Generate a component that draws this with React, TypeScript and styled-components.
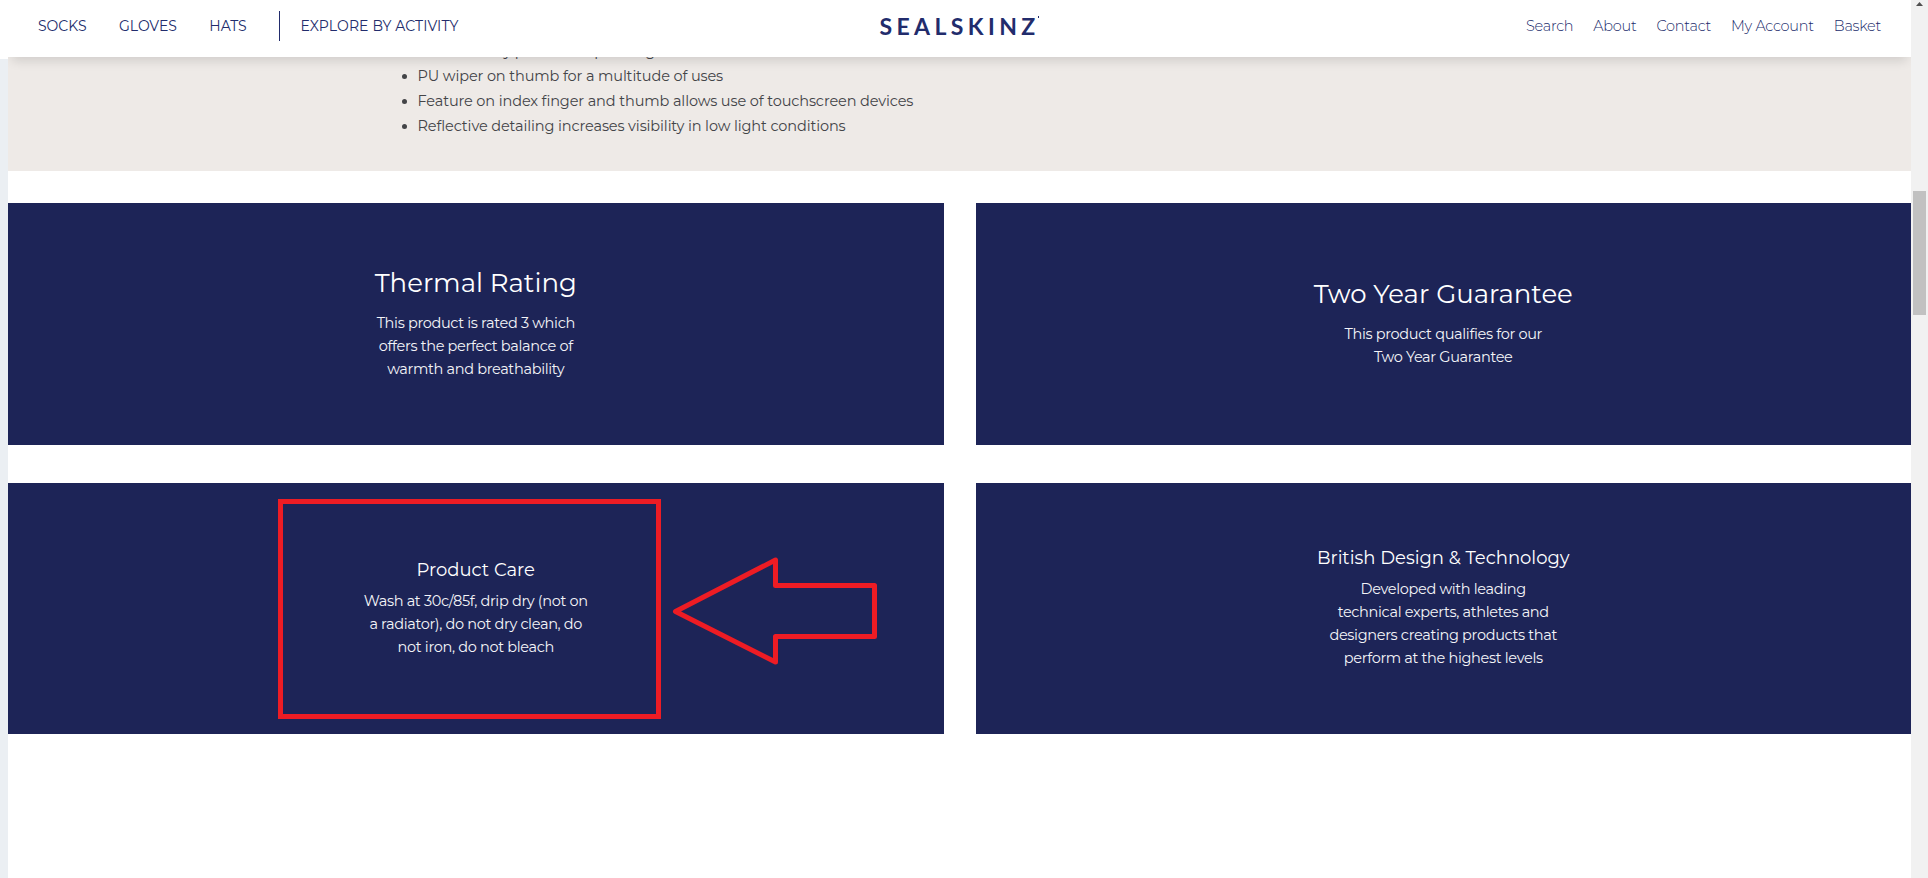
import * as React from 'react';
import styled, {createGlobalStyle} from 'styled-components';

const navy = '#1d2457';
const linkBlue = '#222c6c';
const markerRed = '#ed1c24';

const GlobalStyle = createGlobalStyle`
    body {
        margin: 0;
        overflow: hidden;
        background: #fff;
        font-family: Montserrat, Inter, sans-serif;
    }
`;

const Screen = styled.div`
    display: grid;
    grid-template-columns: 8px 1fr 17px;
    height: 878px;
`;

const Gutter = styled.div`
    margin-top: 59px;
    background: #ebeff3;
`;

const Page = styled.div`
    display: flex;
    flex-direction: column;
    min-width: 0;
    overflow: hidden;
`;

const Header = styled.header`
    position: relative;
    z-index: 1;
    box-sizing: border-box;
    flex: none;
    display: grid;
    grid-template-columns: 1fr auto 1fr;
    align-items: center;
    height: 57px;
    padding: 0 30px 5px;
    background: #fff;
    color: ${linkBlue};
    box-shadow: 0 8px 10px -4px rgba(0, 0, 0, 0.12);
`;

const MainNav = styled.nav`
    display: flex;
    align-items: center;
    font-size: 14px;
    white-space: nowrap;
`;

const NavLink = styled.span`
    margin-right: 32.4px;
`;

const ActivityLink = styled.span`
    display: flex;
    align-items: center;
    height: 30px;
    margin-left: 0.3px;
    padding-left: 20px;
    border-left: 1px solid ${linkBlue};
    letter-spacing: 0.12px;
`;

const Logo = styled.div`
    display: flex;
    align-items: flex-start;
    margin-right: 1px;
    font: 700 23px/28px Lato, sans-serif;
    letter-spacing: 4.4px;
`;

const LogoMark = styled.span`
    width: 1px;
    height: 2px;
    margin: 4px 0 0 -2px;
    background: ${linkBlue};
`;

const UserNav = styled.nav`
    display: flex;
    justify-content: flex-end;
    gap: 20px;
    font-size: 14.5px;
    font-weight: 300;
    letter-spacing: -0.27px;
`;

const Features = styled.section`
    box-sizing: border-box;
    flex: none;
    display: flex;
    flex-direction: column;
    justify-content: flex-end;
    height: 114px;
    padding: 0 0 32px 392px;
    overflow: hidden;
    background: #eeeae7;
`;

const FeatureList = styled.ul`
    margin: 0;
    padding: 0;
    list-style: none;
    color: #434447;
    font-size: 14.5px;
    line-height: 25px;
    letter-spacing: -0.12px;
`;

const FeatureItem = styled.li`
    display: flex;
    align-items: center;

    &::before {
        content: '';
        width: 5px;
        height: 5px;
        margin: 0 10.5px 1px 2px;
        border-radius: 50%;
        background: currentColor;
    }
`;

const Cards = styled.section`
    display: grid;
    grid-template-columns: 1fr 1fr;
    grid-template-rows: 242px 251px;
    gap: 38px 32px;
    margin-top: 32px;
`;

const Card = styled.article<{$small?: boolean}>`
    position: relative;
    display: flex;
    flex-direction: column;
    align-items: center;
    justify-content: center;
    padding-bottom: ${({$small}) => ($small ? '0' : '1px')};
    background: ${navy};
    color: #fff;
    text-align: center;
`;

const CardTitle = styled.h2<{$small?: boolean}>`
    margin: 0 0 ${({$small}) => ($small ? '9px' : '13px')};
    font-size: ${({$small}) => ($small ? '18px' : '26px')};
    line-height: ${({$small}) => ($small ? '22px' : '32px')};
    font-weight: 400;
`;

const CardText = styled.p`
    margin: 0;
    color: #f4f4f8;
    font-size: 14.5px;
    line-height: 23px;
    letter-spacing: -0.33px;
    white-space: pre-line;
`;

const Highlight = styled.div`
    position: absolute;
    top: 16px;
    left: 270px;
    box-sizing: border-box;
    width: 383px;
    height: 220px;
    border: 5px solid ${markerRed};
`;

const Arrow = styled.svg`
    position: absolute;
    top: 72px;
    left: 662px;
`;

const Scrollbar = styled.div`
    display: flex;
    flex-direction: column;
    align-items: center;
    background: #f1f1f1;
`;

const ScrollUp = styled.svg`
    display: block;
    margin-top: 2px;
`;

const ScrollThumb = styled.div`
    width: 13px;
    height: 124px;
    margin-top: 185px;
    background: #c1c1c1;
`;

const features = [
    'Anatomically positioned padding',
    'PU wiper on thumb for a multitude of uses',
    'Feature on index finger and thumb allows use of touchscreen devices',
    'Reflective detailing increases visibility in low light conditions',
];

const shopLinks = ['SOCKS', 'GLOVES', 'HATS'];

const userLinks = ['Search', 'About', 'Contact', 'My Account', 'Basket'];

interface CardModel {
    title: string;
    text: string;
    small?: boolean;
    highlighted?: boolean;
}

const cards: CardModel[] = [
    {
        title: 'Thermal Rating',
        text: 'This product is rated 3 which\noffers the perfect balance of\nwarmth and breathability',
    },
    {
        title: 'Two Year Guarantee',
        text: 'This product qualifies for our\nTwo Year Guarantee',
    },
    {
        title: 'Product Care',
        text: 'Wash at 30c/85f, drip dry (not on\na radiator), do not dry clean, do\nnot iron, do not bleach',
        small: true,
        highlighted: true,
    },
    {
        title: 'British Design & Technology',
        text: 'Developed with leading\ntechnical experts, athletes and\ndesigners creating products that\nperform at the highest levels',
        small: true,
    },
];

const Annotation = () => (
    <>
        <Highlight />
        <Arrow width="210" height="114" viewBox="0 0 210 114">
            <path
                d="M5.5 56.5 L105.5 5 V30.5 H204.5 V81.5 H105.5 V107 Z"
                fill="none"
                stroke={markerRed}
                strokeWidth="5"
                strokeLinejoin="round"
            />
        </Arrow>
    </>
);

const InfoCard = ({card}: {card: CardModel}) => (
    <Card $small={card.small}>
        <CardTitle $small={card.small}>{card.title}</CardTitle>
        <CardText>{card.text}</CardText>
        {card.highlighted && <Annotation />}
    </Card>
);

const App = () => (
    <>
        <GlobalStyle />
        <Screen>
            <Gutter />
            <Page>
                <Header>
                    <MainNav>
                        {shopLinks.map(link => <NavLink key={link}>{link}</NavLink>)}
                        <ActivityLink>EXPLORE BY ACTIVITY</ActivityLink>
                    </MainNav>
                    <Logo>
                        SEALSKINZ
                        <LogoMark />
                    </Logo>
                    <UserNav>
                        {userLinks.map(link => <span key={link}>{link}</span>)}
                    </UserNav>
                </Header>
                <Features>
                    <FeatureList>
                        {features.map(feature => (
                            <FeatureItem key={feature}>{feature}</FeatureItem>
                        ))}
                    </FeatureList>
                </Features>
                <Cards>
                    {cards.map(card => <InfoCard key={card.title} card={card} />)}
                </Cards>
            </Page>
            <Scrollbar>
                <ScrollUp width="7" height="4" viewBox="0 0 7 4">
                    <path d="M3.5 0 L7 4 H0 Z" fill="#505050" />
                </ScrollUp>
                <ScrollThumb />
            </Scrollbar>
        </Screen>
    </>
);

export default App;
